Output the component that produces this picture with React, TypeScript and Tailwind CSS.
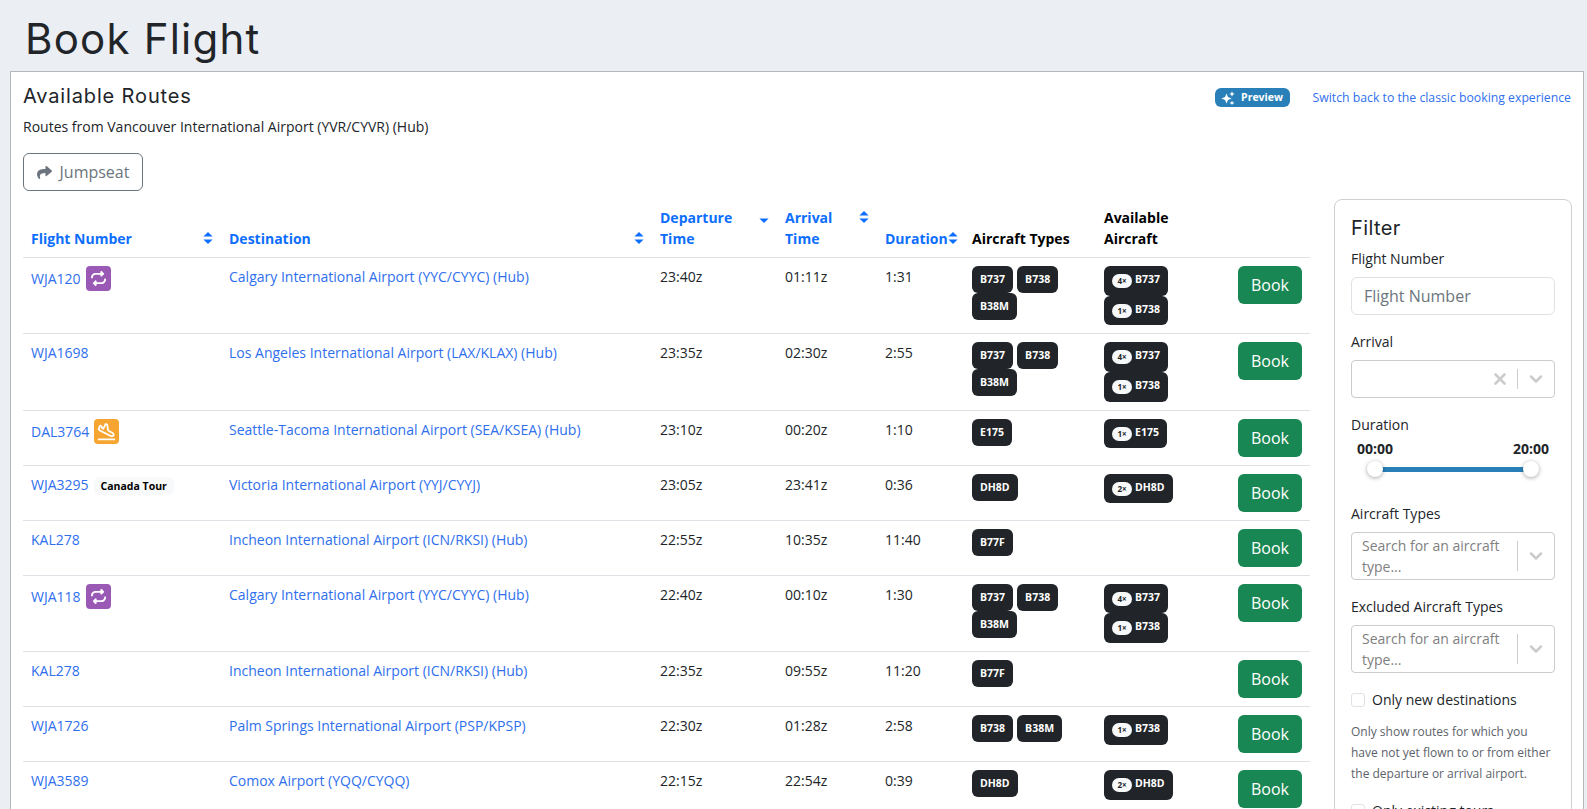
import { FaShare } from "react-icons/fa"
import { FaRepeat } from "react-icons/fa6"
import { ChevronDown, PlaneLanding, X } from "lucide-react"

type Route = {
  flight: string
  tag?: "repeat" | "arrival" | "tour"
  destination: string
  departure: string
  arrival: string
  duration: string
  types: string[]
  available: [string, string][]
}

const mixed: [string, string][] = [
  ["4", "B737"],
  ["1", "B738"],
]
const boeing = ["B737", "B738", "B38M"]

const routes: Route[] = [
  { flight: "WJA120", tag: "repeat", destination: "Calgary International Airport (YYC/CYYC) (Hub)", departure: "23:40z", arrival: "01:11z", duration: "1:31", types: boeing, available: mixed },
  { flight: "WJA1698", destination: "Los Angeles International Airport (LAX/KLAX) (Hub)", departure: "23:35z", arrival: "02:30z", duration: "2:55", types: boeing, available: mixed },
  { flight: "DAL3764", tag: "arrival", destination: "Seattle-Tacoma International Airport (SEA/KSEA) (Hub)", departure: "23:10z", arrival: "00:20z", duration: "1:10", types: ["E175"], available: [["1", "E175"]] },
  { flight: "WJA3295", tag: "tour", destination: "Victoria International Airport (YYJ/CYYJ)", departure: "23:05z", arrival: "23:41z", duration: "0:36", types: ["DH8D"], available: [["2", "DH8D"]] },
  { flight: "KAL278", destination: "Incheon International Airport (ICN/RKSI) (Hub)", departure: "22:55z", arrival: "10:35z", duration: "11:40", types: ["B77F"], available: [] },
  { flight: "WJA118", tag: "repeat", destination: "Calgary International Airport (YYC/CYYC) (Hub)", departure: "22:40z", arrival: "00:10z", duration: "1:30", types: boeing, available: mixed },
  { flight: "KAL278", destination: "Incheon International Airport (ICN/RKSI) (Hub)", departure: "22:35z", arrival: "09:55z", duration: "11:20", types: ["B77F"], available: [] },
  { flight: "WJA1726", destination: "Palm Springs International Airport (PSP/KPSP)", departure: "22:30z", arrival: "01:28z", duration: "2:58", types: ["B738", "B38M"], available: [["1", "B738"]] },
  { flight: "WJA3589", destination: "Comox Airport (YQQ/CYQQ)", departure: "22:15z", arrival: "22:54z", duration: "0:39", types: ["DH8D"], available: [["2", "DH8D"]] },
]

function SortCaret({ downOnly }: { downOnly?: boolean }) {
  return (
    <svg viewBox="0 0 10 14" className="mt-[3px] h-[14px] w-[10px] shrink-0 fill-[#0d6efd]">
      {!downOnly && <path d="M5 1 9.6 5.6H.4Z" />}
      <path d="M.4 8.4h9.2L5 13Z" />
    </svg>
  )
}

function SortHeader({ label, downOnly }: { label: React.ReactNode; downOnly?: boolean }) {
  return (
    <th className="p-2 text-left align-bottom font-bold text-[#0d6efd]">
      <div className="flex items-start justify-between">
        <span>{label}</span>
        <SortCaret downOnly={downOnly} />
      </div>
    </th>
  )
}

function SparkIcon() {
  return (
    <svg viewBox="0 0 14 14" className="h-[14px] w-[14px] fill-white">
      <path d="M5.5 2.4 7 6 10.6 7.5 7 9 5.5 12.6 4 9 .4 7.5 4 6Z" />
      <path d="M11 .2 11.8 2.2 13.8 3 11.8 3.8 11 5.8 10.2 3.8 8.2 3 10.2 2.2Z" />
      <path d="M11 9.4 11.7 11.3 13.6 12 11.7 12.7 11 14 10.3 12.7 8.4 12 10.3 11.3Z" />
    </svg>
  )
}

function FlightTag({ tag }: { tag: Route["tag"] }) {
  if (tag === "repeat") {
    return (
      <span className="flex h-[25px] w-[25px] items-center justify-center rounded bg-[#9b59b6] text-white">
        <FaRepeat className="text-[15px]" />
      </span>
    )
  }
  if (tag === "arrival") {
    return (
      <span className="flex h-[25px] w-[25px] items-center justify-center rounded bg-[#f5a530] text-white">
        <PlaneLanding className="h-[19px] w-[19px]" strokeWidth={2.2} />
      </span>
    )
  }
  if (tag === "tour") {
    return (
      <span className="mt-[3px] rounded-md bg-[#f8f9fa] px-[7px] py-[2px] text-[10.5px] font-bold leading-[14px] text-black">
        Canada Tour
      </span>
    )
  }
  return null
}

function RouteRow({ route }: { route: Route }) {
  return (
    <tr className="border-b border-[#dee2e6] align-top">
      <td className="p-2">
        <div className="flex items-center gap-[5px]">
          <a className="text-[#2f6fed]">{route.flight}</a>
          <FlightTag tag={route.tag} />
        </div>
      </td>
      <td className="p-2">
        <a className="text-[#2f6fed]">{route.destination}</a>
      </td>
      <td className="p-2">{route.departure}</td>
      <td className="p-2">{route.arrival}</td>
      <td className="p-2">{route.duration}</td>
      <td className="p-2">
        <div className="flex flex-wrap gap-x-1">
          {route.types.map((t) => (
            <span key={t} className="h-[27px] rounded-md bg-[#212529] px-2 text-[10.5px] font-bold leading-[26px] text-white">
              {t}
            </span>
          ))}
        </div>
      </td>
      <td className="p-2">
        <div className="flex flex-col items-start">
          {route.available.map(([count, type]) => (
            <span key={type} className="flex h-[29.7px] items-start gap-[3px] rounded-md bg-[#212529] pl-2 pr-2 pt-[8px] text-[10.5px] font-bold leading-[10px] text-white">
              <span className="flex h-[14px] w-5 items-center justify-center rounded-full bg-[#f8f9fa] text-[8px] text-[#212529]">
                {count}×
              </span>
              <span className="leading-[10px]">{type}</span>
            </span>
          ))}
        </div>
      </td>
      <td className="p-2">
        <button className="h-[38px] w-16 rounded-md bg-[#198754] text-base text-white">Book</button>
      </td>
    </tr>
  )
}

function SelectBox({ placeholder, clearable }: { placeholder?: boolean; clearable?: boolean }) {
  return (
    <div className={`flex items-center rounded border border-[#cccccc] ${placeholder ? "h-[48px]" : "h-[38px]"}`}>
      <div className="flex-1 pl-[10px] pr-2 leading-[21px] text-[#808080]">
        {placeholder && "Search for an aircraft type..."}
      </div>
      {clearable && <X className="mr-[8px] h-[18px] w-[18px] text-[#cccccc]" strokeWidth={3.5} />}
      <div className={`w-px bg-[#cccccc] ${placeholder ? "h-[30px]" : "h-5"}`} />
      <ChevronDown className="mx-[8px] h-5 w-5 text-[#cccccc]" strokeWidth={3} />
    </div>
  )
}

function FilterPanel() {
  return (
    <aside className="w-[238px] shrink-0 self-start rounded-lg border border-[#cfcfcf] p-4 pb-10">
      <h3 className="mb-2 font-['Inter',sans-serif] text-xl font-normal leading-6 tracking-[0.4px] text-[#212529]">Filter</h3>
      <label className="mb-2 block">Flight Number</label>
      <div className="mb-4 flex h-[38px] items-center rounded-md border border-[#dee2e6] px-3 text-base text-[#6c757d]">Flight Number</div>

      <label className="mb-2 block">Arrival</label>
      <div className="mb-4"><SelectBox clearable /></div>

      <label className="mb-[3px] block">Duration</label>
      <div className="flex justify-between px-[6px] font-bold">
        <span>00:00</span>
        <span>20:00</span>
      </div>
      <div className="mb-[26px] mt-[2px] flex h-4 items-center px-6">
        <div className="relative h-[5px] w-full bg-[#2980b9]">
          <span className="absolute -left-2 top-[-6px] h-4 w-4 rounded-full bg-white shadow-[0_1px_4px_rgba(0,0,0,0.35)]" />
          <span className="absolute -right-2 top-[-6px] h-4 w-4 rounded-full bg-white shadow-[0_1px_4px_rgba(0,0,0,0.35)]" />
        </div>
      </div>

      <label className="mb-2 block">Aircraft Types</label>
      <div className="mb-4"><SelectBox placeholder /></div>

      <label className="mb-2 block">Excluded Aircraft Types</label>
      <div className="mb-4"><SelectBox placeholder /></div>

      <div className="mb-[11px] flex items-center gap-[7px]">
        <span className="h-[14px] w-[14px] rounded-[3px] border border-[#dee2e6]" />
        <span>Only new destinations</span>
      </div>
      <p className="mb-4 text-xs leading-[21px] text-[#5c636a]">
        Only show routes for which you have not yet flown to or from either the departure or arrival airport.
      </p>
      <div className="flex items-center gap-[7px]">
        <span className="h-[14px] w-[14px] rounded-[3px] border border-[#dee2e6]" />
        <span>Only existing tours</span>
      </div>
    </aside>
  )
}

export default function App() {
  return (
    <div className="h-screen overflow-hidden bg-[#ebeef3] font-['Open_Sans',sans-serif] text-sm leading-[21px] text-[#212529]">
      <h1 className="flex h-[71px] items-center pl-[25px] pt-[5px] font-['Inter',sans-serif] text-[42px] font-normal tracking-[1.2px] text-[#212529]">Book Flight</h1>
      <main className="ml-[10px] mr-[3px] border border-[#b5b8bb] bg-white p-3 pb-0">
        <div className="flex items-start justify-between">
          <div>
            <h2 className="mb-2 font-['Inter',sans-serif] text-xl font-normal leading-6 tracking-[0.85px] text-[#212529]">Available Routes</h2>
            <p className="mb-4">Routes from Vancouver International Airport (YVR/CYVR) (Hub)</p>
            <button className="flex h-[38px] w-[120px] items-center justify-center gap-2 rounded-md border border-[#6c757d] text-base text-[#6c757d]">
              <FaShare className="text-[15px]" />
              Jumpseat
            </button>
          </div>
          <div className="mt-[3px] flex items-center gap-[23px]">
            <span className="flex h-[19px] w-[75px] items-center justify-center gap-[6px] rounded-md bg-[#2980b9] text-[10.5px] font-bold text-white">
              <SparkIcon />
              Preview
            </span>
            <a className="text-[12.25px] text-[#2f6fed]">Switch back to the classic booking experience</a>
          </div>
        </div>

        <div className="mt-2 flex items-start gap-6">
          <table className="w-[1287px] table-fixed border-collapse">
            <colgroup>
              <col className="w-[198px]" />
              <col className="w-[431px]" />
              <col className="w-[125px]" />
              <col className="w-[100px]" />
              <col className="w-[87px]" />
              <col className="w-[132px]" />
              <col className="w-[134px]" />
              <col className="w-[80px]" />
            </colgroup>
            <thead>
              <tr className="border-b border-[#dee2e6]">
                <SortHeader label="Flight Number" />
                <SortHeader label="Destination" />
                <SortHeader label="Departure Time" downOnly />
                <SortHeader label="Arrival Time" />
                <SortHeader label="Duration" />
                <th className="p-2 text-left align-bottom font-bold text-black">Aircraft Types</th>
                <th className="p-2 text-left align-bottom font-bold text-black">Available Aircraft</th>
                <th className="p-2" />
              </tr>
            </thead>
            <tbody>
              {routes.map((route) => (
                <RouteRow key={route.flight + route.departure} route={route} />
              ))}
            </tbody>
          </table>
          <FilterPanel />
        </div>
      </main>
    </div>
  )
}
